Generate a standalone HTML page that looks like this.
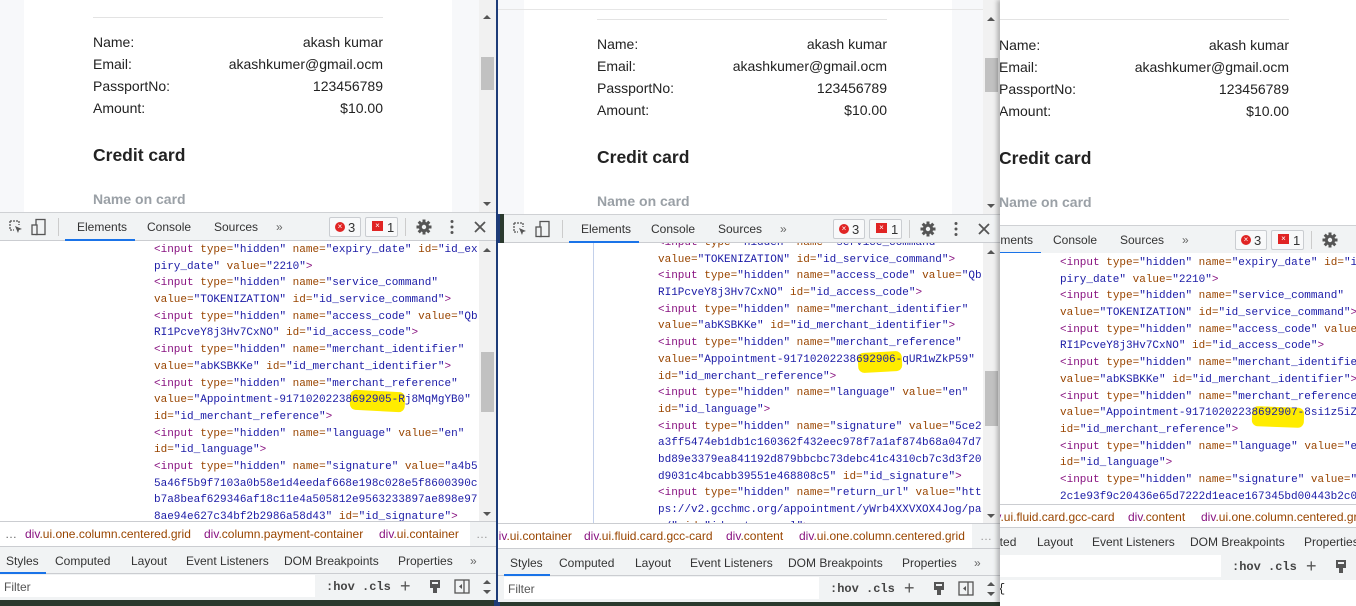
<!DOCTYPE html>
<html><head><meta charset="utf-8">
<style>
*{margin:0;padding:0;box-sizing:border-box}
body{width:1356px;height:606px;overflow:hidden;background:#2b3a2e;font-family:"Liberation Sans",sans-serif;position:relative}
.panel{position:absolute;top:0;height:606px;overflow:hidden}
.inner{position:absolute;top:0;width:496px;height:606px}
.abs{position:absolute}
.page{position:absolute;left:0;top:0;width:496px;background:#f7f8fa;overflow:hidden}
.card{position:absolute;left:24px;width:428px;top:0;bottom:0;background:#fff}
.hr{position:absolute;left:93px;width:290px;height:1px;background:#e3e3e3}
.row{position:absolute;left:93px;width:290px;display:flex;justify-content:space-between;font-size:14px;color:#222;line-height:16px}
.cc{position:absolute;left:93px;font-size:17.5px;font-weight:bold;color:#222}
.noc{position:absolute;left:93px;font-size:14px;font-weight:bold;color:#9aa0a6}
.sb{position:absolute;left:479px;width:17px;background:#f1f1f1}
.thumb{position:absolute;left:2px;width:13px;background:#c1c1c1}
.arr{position:absolute;left:4px;width:0;height:0;border-left:4px solid transparent;border-right:4px solid transparent}
.up{border-bottom:4px solid #555}.dn{border-top:4px solid #555}
.tb{position:absolute;left:0;width:496px;height:29px;background:#f1f3f4;border-top:1px solid #cfd1d4;border-bottom:1px solid #cbcdd1;font-size:12px;color:#333}
.tb span.t{position:absolute;top:7px}
.ul{position:absolute;left:65px;width:70px;bottom:-1px;height:2px;background:#1a73e8}
.badge{position:absolute;top:4px;height:20px;border:1px solid #cacdd1;border-radius:2px;background:#f8f9fa;font-size:13px;color:#333}
.code{position:absolute;left:0;width:496px;background:#fff;overflow:hidden}
.lines{position:absolute;left:154px;font-family:"Liberation Mono",monospace;font-size:11px;line-height:16.7px;color:#222}
.ln{height:16.7px;white-space:pre}
.tg{color:#881280}.at{color:#994500}.vl{color:#1a1aa6}
.hl{position:absolute;background:#ffec00;border-radius:6px}
.bc{position:absolute;left:0;width:496px;height:25px;background:#fff;border-top:1px solid #cbcdd1;font-size:12px;white-space:nowrap}
.bc span{position:absolute;top:5px}
.bc .d{color:#881280}.bc .c{color:#994500}
.tabs{position:absolute;left:0;width:496px;height:28px;background:#f1f3f4;border-top:1px solid #cbcdd1;border-bottom:1px solid #cbcdd1;font-size:12px;color:#333;white-space:nowrap}
.tabs span{position:absolute;top:7px}
.flt{position:absolute;left:0;width:496px;height:26px;background:#f1f3f4;font-size:12px;color:#333}
.flt .in{position:absolute;left:0;top:1px;width:315px;height:22px;background:#fff}
.mono{font-family:"Liberation Mono",monospace;font-weight:bold;color:#444}
</style></head><body>

<div class="abs" style="left:494px;top:0;width:6px;height:606px;background:#1e3c78"></div>

<!-- PANEL 1 -->
<div class="panel" style="left:0;width:496px">
<div class="inner" style="left:0">
 <div class="page" style="height:212px">
  <div class="card"></div>
  <div class="hr" style="top:17px"></div>
  <div class="row" style="top:34px"><span>Name:</span><span>akash kumar</span></div>
  <div class="row" style="top:56px"><span>Email:</span><span>akashkumer@gmail.ocm</span></div>
  <div class="row" style="top:78px"><span>PassportNo:</span><span>123456789</span></div>
  <div class="row" style="top:100px"><span>Amount:</span><span>$10.00</span></div>
  <div class="cc" style="top:145px">Credit card</div>
  <div class="noc" style="top:191px">Name on card</div>
  <div class="sb" style="top:0;height:212px"><div class="arr up" style="top:15px"></div><div class="thumb" style="top:57px;height:33px"></div><div class="arr dn" style="top:202px"></div></div>
 </div>
 <div class="tb" style="top:212px">
  <svg class="abs" style="left:8px;top:6px" width="16" height="16" viewBox="0 0 16 16"><path d="M2 2h9v4M2 2v9h4" fill="none" stroke="#555" stroke-width="1.3" stroke-dasharray="2 1"/><path d="M7 7l7 3-3 1-1 3z" fill="#555"/></svg>
  <svg class="abs" style="left:31px;top:5px" width="16" height="18" viewBox="0 0 16 18"><rect x="5" y="1.5" width="9" height="15" fill="none" stroke="#555" stroke-width="1.3"/><rect x="1" y="7" width="5" height="9.5" fill="#f1f3f4" stroke="#555" stroke-width="1.3"/></svg>
  <div class="abs" style="left:58px;top:5px;width:1px;height:18px;background:#ccc"></div>
  <span class="t" style="left:77px">Elements</span><div class="ul"></div>
  <span class="t" style="left:147px">Console</span>
  <span class="t" style="left:214px">Sources</span>
  <span class="t" style="left:276px;color:#666">»</span>
  <div class="badge" style="left:329px;width:32px"><span class="abs" style="left:5px;top:4px;width:10px;height:10px;border-radius:50%;background:#e02424;color:#fff;font-size:8px;line-height:10px;text-align:center">×</span><span class="abs" style="left:18px;top:2px">3</span></div>
  <div class="badge" style="left:365px;width:33px"><span class="abs" style="left:6px;top:3px;width:11px;height:10px;background:#e02424;color:#fff;font-size:8px;line-height:10px;text-align:center">×</span><span class="abs" style="left:21px;top:2px">1</span></div>
  <div class="abs" style="left:405px;top:5px;width:1px;height:18px;background:#ccc"></div>
  <svg class="abs" style="left:416px;top:6px" width="16" height="16" viewBox="0 0 16 16"><g fill="#555"><circle cx="8" cy="8" r="5.2"/><rect x="6.5" y="0.5" width="3" height="15"/><rect x="0.5" y="6.5" width="15" height="3"/><rect x="6.5" y="0.5" width="3" height="15" transform="rotate(45 8 8)"/><rect x="6.5" y="0.5" width="3" height="15" transform="rotate(-45 8 8)"/></g><circle cx="8" cy="8" r="2.2" fill="#f1f3f4"/></svg>
  <svg class="abs" style="left:450px;top:6px" width="4" height="16"><circle cx="2" cy="2.5" r="1.5" fill="#555"/><circle cx="2" cy="8" r="1.5" fill="#555"/><circle cx="2" cy="13.5" r="1.5" fill="#555"/></svg>
  <svg class="abs" style="left:474px;top:8px" width="12" height="12"><path d="M1 1L11 11M11 1L1 11" stroke="#555" stroke-width="1.8"/></svg>
 </div>
 <div class="code" style="top:241px;height:280px">
  <div class="hl" style="left:350px;top:150px;width:55px;height:20px;transform:rotate(3deg)"></div>
  <div class="lines p" style="top:1px"><div class="ln">&lt;input type="hidden" name="expiry_date" id="id_ex</div><div class="ln">piry_date" value="2210"&gt;</div><div class="ln">&lt;input type="hidden" name="service_command"</div><div class="ln">value="TOKENIZATION" id="id_service_command"&gt;</div><div class="ln">&lt;input type="hidden" name="access_code" value="Qb</div><div class="ln">RI1PcveY8j3Hv7CxNO" id="id_access_code"&gt;</div><div class="ln">&lt;input type="hidden" name="merchant_identifier"</div><div class="ln">value="abKSBKKe" id="id_merchant_identifier"&gt;</div><div class="ln">&lt;input type="hidden" name="merchant_reference"</div><div class="ln">value="Appointment-91710202238692905-Rj8MqMgYB0"</div><div class="ln">id="id_merchant_reference"&gt;</div><div class="ln">&lt;input type="hidden" name="language" value="en"</div><div class="ln">id="id_language"&gt;</div><div class="ln">&lt;input type="hidden" name="signature" value="a4b5</div><div class="ln">5a46f5b9f7103a0b58e1d4eedaf668e198c028e5f8600390c</div><div class="ln">b7a8beaf629346af18c11e4a505812e9563233897ae898e97</div><div class="ln">8ae94e627c34bf2b2986a58d43" id="id_signature"&gt;</div></div>
  <div class="sb" style="top:0;height:280px;background:#f1f1f1"><div class="arr up" style="top:7px"></div><div class="thumb" style="top:111px;height:60px"></div><div class="arr dn" style="top:271px"></div></div>
 </div>
 <div class="bc" style="top:521px">
  <span style="left:5px;color:#666">…</span>
  <span style="left:25px"><b class="d" style="font-weight:normal">div</b><i class="c" style="font-style:normal">.ui.one.column.centered.grid</i></span>
  <span style="left:204px"><b class="d" style="font-weight:normal">div</b><i class="c" style="font-style:normal">.column.payment-container</i></span>
  <span style="left:379px"><b class="d" style="font-weight:normal">div</b><i class="c" style="font-style:normal">.ui.container</i></span>
  <div class="abs" style="left:470px;top:0;width:26px;height:24px;background:#f1f3f4"></div><span style="left:476px;color:#999">…</span>
 </div>
 <div class="tabs" style="top:546px">
  <span style="left:6px">Styles</span><div class="abs" style="left:0;bottom:-1px;width:46px;height:2px;background:#1a73e8"></div>
  <span style="left:55px">Computed</span><span style="left:131px">Layout</span><span style="left:186px">Event Listeners</span><span style="left:284px">DOM Breakpoints</span><span style="left:398px">Properties</span><span style="left:470px;color:#666">»</span>
 </div>
 <div class="flt" style="top:574px">
  <div class="in"></div><span class="abs" style="left:4px;top:6px;color:#555">Filter</span>
  <span class="abs mono" style="left:326px;top:6px">:hov</span><span class="abs mono" style="left:362px;top:6px">.cls</span>
  <span class="abs" style="left:400px;top:2px;font-size:18px;color:#555">+</span>
  <svg class="abs" style="left:428px;top:5px" width="14" height="15"><rect x="2" y="1" width="10" height="8" fill="#555"/><rect x="5" y="9" width="4" height="5" fill="#555"/><rect x="4" y="3" width="6" height="2" fill="#f1f3f4"/></svg>
  <svg class="abs" style="left:454px;top:5px" width="16" height="15"><rect x="1" y="1" width="14" height="13" fill="none" stroke="#555" stroke-width="1.3"/><path d="M10 1v13" stroke="#555" stroke-width="1.3"/><path d="M8 5v5L5 7.5z" fill="#555"/></svg>
  <div class="arr up" style="left:483px;top:6px"></div><div class="arr dn" style="left:483px;top:16px"></div>
 </div>
</div>
</div>

<!-- PANEL 2 -->
<div class="panel" style="left:498px;width:502px">
<div class="inner" style="left:6px">
 <div class="page" style="height:214px;left:-10px;width:510px">
  <div class="card" style="left:30px"></div>
  <div class="abs" style="left:0;top:9px;width:510px;height:1px;background:#e6e6e6"></div>
  <div class="hr" style="top:19px;left:103px"></div>
  <div class="row" style="top:36px;left:103px"><span>Name:</span><span>akash kumar</span></div>
  <div class="row" style="top:58px;left:103px"><span>Email:</span><span>akashkumer@gmail.ocm</span></div>
  <div class="row" style="top:80px;left:103px"><span>PassportNo:</span><span>123456789</span></div>
  <div class="row" style="top:102px;left:103px"><span>Amount:</span><span>$10.00</span></div>
  <div class="cc" style="top:147px;left:103px">Credit card</div>
  <div class="noc" style="top:193px;left:103px">Name on card</div>
  <div class="sb" style="top:0;height:214px;left:489px;width:18px"><div class="arr up" style="top:17px"></div><div class="thumb" style="top:58px;height:34px"></div><div class="arr dn" style="top:204px"></div></div>
 </div>
 <div class="tb" style="top:214px">
  <svg class="abs" style="left:8px;top:6px" width="16" height="16" viewBox="0 0 16 16"><path d="M2 2h9v4M2 2v9h4" fill="none" stroke="#555" stroke-width="1.3" stroke-dasharray="2 1"/><path d="M7 7l7 3-3 1-1 3z" fill="#555"/></svg>
  <svg class="abs" style="left:31px;top:5px" width="16" height="18" viewBox="0 0 16 18"><rect x="5" y="1.5" width="9" height="15" fill="none" stroke="#555" stroke-width="1.3"/><rect x="1" y="7" width="5" height="9.5" fill="#f1f3f4" stroke="#555" stroke-width="1.3"/></svg>
  <div class="abs" style="left:58px;top:5px;width:1px;height:18px;background:#ccc"></div>
  <span class="t" style="left:77px">Elements</span><div class="ul"></div>
  <span class="t" style="left:147px">Console</span>
  <span class="t" style="left:214px">Sources</span>
  <span class="t" style="left:276px;color:#666">»</span>
  <div class="badge" style="left:329px;width:32px"><span class="abs" style="left:5px;top:4px;width:10px;height:10px;border-radius:50%;background:#e02424;color:#fff;font-size:8px;line-height:10px;text-align:center">×</span><span class="abs" style="left:18px;top:2px">3</span></div>
  <div class="badge" style="left:365px;width:33px"><span class="abs" style="left:6px;top:3px;width:11px;height:10px;background:#e02424;color:#fff;font-size:8px;line-height:10px;text-align:center">×</span><span class="abs" style="left:21px;top:2px">1</span></div>
  <div class="abs" style="left:405px;top:5px;width:1px;height:18px;background:#ccc"></div>
  <svg class="abs" style="left:416px;top:6px" width="16" height="16" viewBox="0 0 16 16"><g fill="#555"><circle cx="8" cy="8" r="5.2"/><rect x="6.5" y="0.5" width="3" height="15"/><rect x="0.5" y="6.5" width="15" height="3"/><rect x="6.5" y="0.5" width="3" height="15" transform="rotate(45 8 8)"/><rect x="6.5" y="0.5" width="3" height="15" transform="rotate(-45 8 8)"/></g><circle cx="8" cy="8" r="2.2" fill="#f1f3f4"/></svg>
  <svg class="abs" style="left:450px;top:6px" width="4" height="16"><circle cx="2" cy="2.5" r="1.5" fill="#555"/><circle cx="2" cy="8" r="1.5" fill="#555"/><circle cx="2" cy="13.5" r="1.5" fill="#555"/></svg>
  <svg class="abs" style="left:474px;top:8px" width="12" height="12"><path d="M1 1L11 11M11 1L1 11" stroke="#555" stroke-width="1.8"/></svg>
 </div>
 <div class="code" style="top:243px;height:280px;left:-6px;width:502px">
  <div class="abs" style="left:95px;top:0;width:1px;height:280px;background:#c3d0ea"></div>
  <div class="hl" style="left:360px;top:109px;width:44px;height:20px;transform:rotate(-3deg)"></div>
  <div class="lines p" style="top:-8px;left:160px"><div class="ln">&lt;input type="hidden" name="service_command"</div><div class="ln">value="TOKENIZATION" id="id_service_command"&gt;</div><div class="ln">&lt;input type="hidden" name="access_code" value="Qb</div><div class="ln">RI1PcveY8j3Hv7CxNO" id="id_access_code"&gt;</div><div class="ln">&lt;input type="hidden" name="merchant_identifier"</div><div class="ln">value="abKSBKKe" id="id_merchant_identifier"&gt;</div><div class="ln">&lt;input type="hidden" name="merchant_reference"</div><div class="ln">value="Appointment-91710202238692906-qUR1wZkP59"</div><div class="ln">id="id_merchant_reference"&gt;</div><div class="ln">&lt;input type="hidden" name="language" value="en"</div><div class="ln">id="id_language"&gt;</div><div class="ln">&lt;input type="hidden" name="signature" value="5ce2</div><div class="ln">a3ff5474eb1db1c160362f432eec978f7a1af874b68a047d7</div><div class="ln">bd89e3379ea841192d879bbcbc73debc41c4310cb7c3d3f20</div><div class="ln">d9031c4bcabb39551e468808c5" id="id_signature"&gt;</div><div class="ln">&lt;input type="hidden" name="return_url" value="htt</div><div class="ln">ps://v2.gcchmc.org/appointment/yWrb4XXVXOX4Jog/pa</div><div class="ln">y/" id="id_return_url"&gt;</div></div>
  <div class="sb" style="top:0;height:280px;left:485px"><div class="arr up" style="top:7px"></div><div class="thumb" style="top:128px;height:55px"></div><div class="arr dn" style="top:271px"></div></div>
 </div>
 <div class="bc" style="top:523px;left:-6px;width:502px">
  <span style="left:-6px"><b class="d" style="font-weight:normal">div</b><i class="c" style="font-style:normal">.ui.container</i></span>
  <span style="left:86px"><b class="d" style="font-weight:normal">div</b><i class="c" style="font-style:normal">.ui.fluid.card.gcc-card</i></span>
  <span style="left:228px"><b class="d" style="font-weight:normal">div</b><i class="c" style="font-style:normal">.content</i></span>
  <span style="left:301px"><b class="d" style="font-weight:normal">div</b><i class="c" style="font-style:normal">.ui.one.column.centered.grid</i></span>
  <div class="abs" style="left:474px;top:0;width:28px;height:24px;background:#f1f3f4"></div><span style="left:482px;color:#999">…</span>
 </div>
 <div class="tabs" style="top:548px;left:-6px;width:502px">
  <span style="left:12px">Styles</span><div class="abs" style="left:6px;bottom:-1px;width:46px;height:2px;background:#1a73e8"></div>
  <span style="left:61px">Computed</span><span style="left:137px">Layout</span><span style="left:192px">Event Listeners</span><span style="left:290px">DOM Breakpoints</span><span style="left:404px">Properties</span><span style="left:476px;color:#666">»</span>
 </div>
 <div class="flt" style="top:576px;left:-6px;width:502px">
  <div class="in" style="left:6px"></div><span class="abs" style="left:10px;top:6px;color:#555">Filter</span>
  <span class="abs mono" style="left:332px;top:6px">:hov</span><span class="abs mono" style="left:368px;top:6px">.cls</span>
  <span class="abs" style="left:406px;top:2px;font-size:18px;color:#555">+</span>
  <svg class="abs" style="left:434px;top:5px" width="14" height="15"><rect x="2" y="1" width="10" height="8" fill="#555"/><rect x="5" y="9" width="4" height="5" fill="#555"/><rect x="4" y="3" width="6" height="2" fill="#f1f3f4"/></svg>
  <svg class="abs" style="left:460px;top:5px" width="16" height="15"><rect x="1" y="1" width="14" height="13" fill="none" stroke="#555" stroke-width="1.3"/><path d="M10 1v13" stroke="#555" stroke-width="1.3"/><path d="M8 5v5L5 7.5z" fill="#555"/></svg>
  <div class="arr up" style="left:489px;top:6px"></div><div class="arr dn" style="left:489px;top:16px"></div>
 </div>
</div>
</div>

<!-- PANEL 3 -->
<div class="panel" style="left:1000px;width:356px;background:#fff;box-shadow:-3px 0 4px rgba(0,0,0,.25)">
<div class="inner" style="left:-94px">
 <div class="page" style="height:225px;background:#fff">
  <div class="hr" style="top:19px"></div>
  <div class="row" style="top:37px"><span>Name:</span><span>akash kumar</span></div>
  <div class="row" style="top:59px"><span>Email:</span><span>akashkumer@gmail.ocm</span></div>
  <div class="row" style="top:81px"><span>PassportNo:</span><span>123456789</span></div>
  <div class="row" style="top:103px"><span>Amount:</span><span>$10.00</span></div>
  <div class="cc" style="top:148px">Credit card</div>
  <div class="noc" style="top:194px">Name on card</div>
 </div>
 <div class="tb" style="top:225px">
  <span class="t" style="left:77px">Elements</span><div class="ul"></div>
  <span class="t" style="left:147px">Console</span>
  <span class="t" style="left:214px">Sources</span>
  <span class="t" style="left:276px;color:#666">»</span>
  <div class="badge" style="left:329px;width:32px"><span class="abs" style="left:5px;top:4px;width:10px;height:10px;border-radius:50%;background:#e02424;color:#fff;font-size:8px;line-height:10px;text-align:center">×</span><span class="abs" style="left:18px;top:2px">3</span></div>
  <div class="badge" style="left:365px;width:33px"><span class="abs" style="left:6px;top:3px;width:11px;height:10px;background:#e02424;color:#fff;font-size:8px;line-height:10px;text-align:center">×</span><span class="abs" style="left:21px;top:2px">1</span></div>
  <div class="abs" style="left:405px;top:5px;width:1px;height:18px;background:#ccc"></div>
  <svg class="abs" style="left:416px;top:6px" width="16" height="16" viewBox="0 0 16 16"><g fill="#555"><circle cx="8" cy="8" r="5.2"/><rect x="6.5" y="0.5" width="3" height="15"/><rect x="0.5" y="6.5" width="15" height="3"/><rect x="6.5" y="0.5" width="3" height="15" transform="rotate(45 8 8)"/><rect x="6.5" y="0.5" width="3" height="15" transform="rotate(-45 8 8)"/></g><circle cx="8" cy="8" r="2.2" fill="#f1f3f4"/></svg>
 </div>
 <div class="code" style="top:253px;height:251px">
  <div class="hl" style="left:346px;top:154px;width:52px;height:20px;transform:rotate(2deg)"></div>
  <div class="lines p" style="top:2px"><div class="ln">&lt;input type="hidden" name="expiry_date" id="id_ex</div><div class="ln">piry_date" value="2210"&gt;</div><div class="ln">&lt;input type="hidden" name="service_command"</div><div class="ln">value="TOKENIZATION" id="id_service_command"&gt;</div><div class="ln">&lt;input type="hidden" name="access_code" value="Qb</div><div class="ln">RI1PcveY8j3Hv7CxNO" id="id_access_code"&gt;</div><div class="ln">&lt;input type="hidden" name="merchant_identifier"</div><div class="ln">value="abKSBKKe" id="id_merchant_identifier"&gt;</div><div class="ln">&lt;input type="hidden" name="merchant_reference"</div><div class="ln">value="Appointment-91710202238692907-8si1z5iZ"</div><div class="ln">id="id_merchant_reference"&gt;</div><div class="ln">&lt;input type="hidden" name="language" value="en"</div><div class="ln">id="id_language"&gt;</div><div class="ln">&lt;input type="hidden" name="signature" value="</div><div class="ln">2c1e93f9c20436e65d7222d1eace167345bd00443b2c0</div></div>
 </div>
 <div class="bc" style="top:504px">
  <span style="left:80px"><b class="d" style="font-weight:normal">div</b><i class="c" style="font-style:normal">.ui.fluid.card.gcc-card</i></span>
  <span style="left:222px"><b class="d" style="font-weight:normal">div</b><i class="c" style="font-style:normal">.content</i></span>
  <span style="left:295px"><b class="d" style="font-weight:normal">div</b><i class="c" style="font-style:normal">.ui.one.column.centered.grid</i></span>
 </div>
 <div class="tabs" style="top:527px">
  <span style="left:55px">Computed</span><span style="left:131px">Layout</span><span style="left:186px">Event Listeners</span><span style="left:284px">DOM Breakpoints</span><span style="left:398px">Properties</span>
 </div>
 <div class="flt" style="top:554px">
  <div class="in"></div>
  <span class="abs mono" style="left:326px;top:6px">:hov</span><span class="abs mono" style="left:362px;top:6px">.cls</span>
  <span class="abs" style="left:400px;top:2px;font-size:18px;color:#555">+</span>
  <svg class="abs" style="left:428px;top:5px" width="14" height="15"><rect x="2" y="1" width="10" height="8" fill="#555"/><rect x="5" y="9" width="4" height="5" fill="#555"/><rect x="4" y="3" width="6" height="2" fill="#f1f3f4"/></svg>
 </div>
 <div class="abs" style="left:0;top:580px;width:496px;height:26px;background:#fff"><span class="abs mono" style="left:92px;top:2px;font-weight:normal;color:#222;font-size:12px">{</span></div>
</div>
</div>

<script>
document.querySelectorAll('.lines').forEach(function(b){
  var inQ=false;
  b.querySelectorAll('.ln').forEach(function(l){
    var s=l.textContent,out='',i=0;
    function w(c,t){out+='<span class="'+c+'">'+t.replace(/&/g,'&amp;').replace(/</g,'&lt;').replace(/>/g,'&gt;')+'</span>';}
    while(i<s.length){
      var ch=s[i];
      if(inQ){var j=s.indexOf('"',i);if(j<0){w('vl',s.slice(i));i=s.length;}else{w('vl',s.slice(i,j+1));i=j+1;inQ=false;}}
      else if(ch=='"'){inQ=true;w('vl','"');i++;}
      else if(ch=='<'){var m=s.slice(i).match(/^<\/?\w+/);w('tg',m[0]);i+=m[0].length;}
      else if(ch=='>'){w('tg','>');i++;}
      else {var m2=s.slice(i).match(/^[\w-]+=/);if(m2){w('at',m2[0]);i+=m2[0].length;}else{out+=ch;i++;}}
    }
    l.innerHTML=out;
  });
});
</script>
</body></html>
